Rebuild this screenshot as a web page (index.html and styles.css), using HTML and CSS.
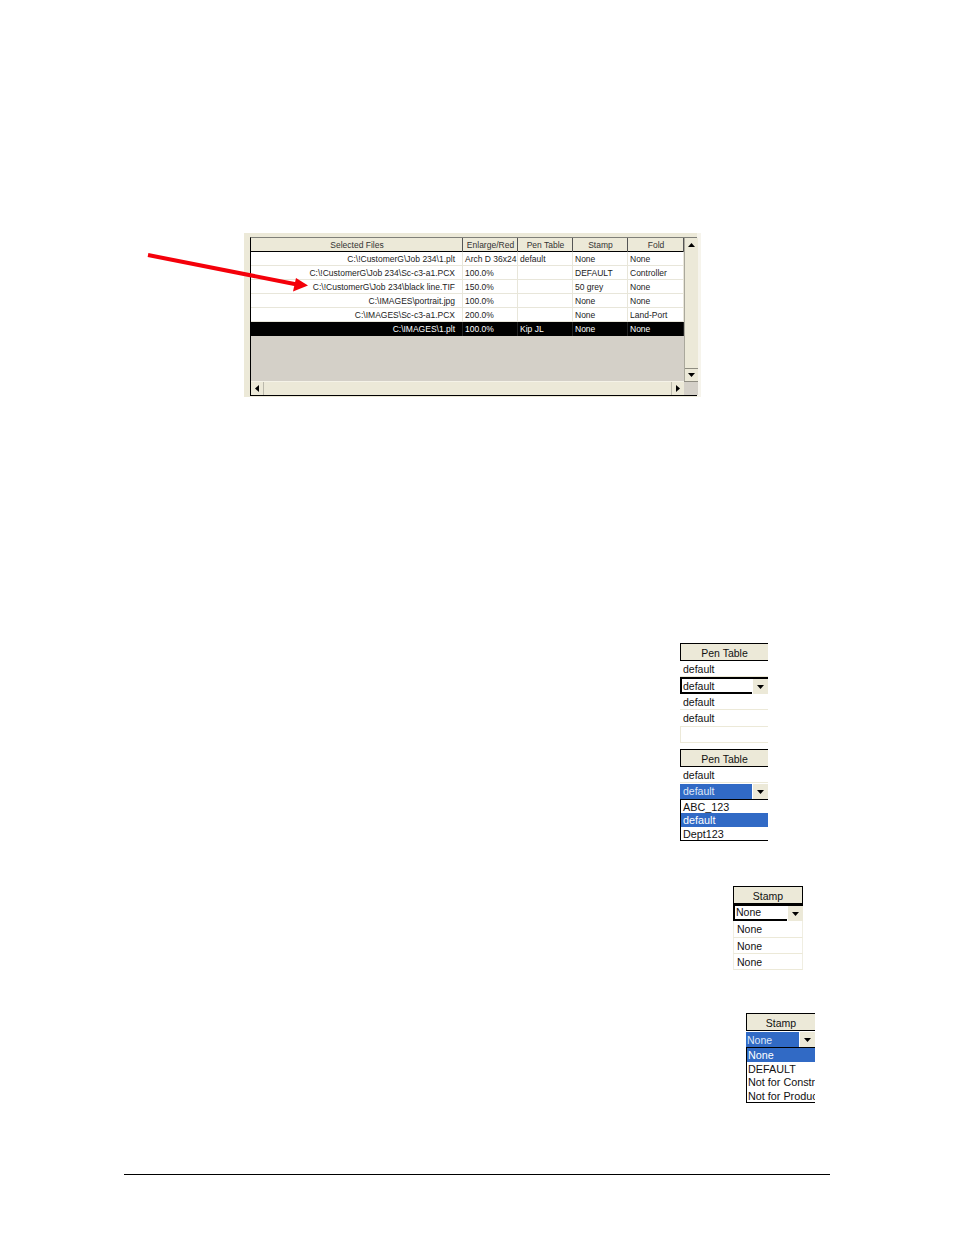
FILE: index.html
```html
<!DOCTYPE html>
<html lang="en">
<head>
<meta charset="utf-8">
<title>Selected Files</title>
<link rel="stylesheet" href="styles.css">
</head>
<body>
<main class="page">
  <section class="main-figure">
    <div class="grid-window">
      <div class="grid-body">
        <div class="file-grid">
          <div class="row head"><span class="c ctr">Selected Files</span><span class="c ctr">Enlarge/Red</span><span class="c ctr">Pen Table</span><span class="c ctr">Stamp</span><span class="c ctr">Fold</span></div>
          <div class="row"><span class="c rgt">C:\!CustomerG\Job 234\1.plt</span><span class="c">Arch D 36x24</span><span class="c">default</span><span class="c">None</span><span class="c">None</span></div>
          <div class="row"><span class="c rgt">C:\!CustomerG\Job 234\Sc-c3-a1.PCX</span><span class="c">100.0%</span><span class="c"></span><span class="c">DEFAULT</span><span class="c">Controller</span></div>
          <div class="row"><span class="c rgt">C:\!CustomerG\Job 234\black line.TIF</span><span class="c">150.0%</span><span class="c"></span><span class="c">50 grey</span><span class="c">None</span></div>
          <div class="row"><span class="c rgt">C:\IMAGES\portrait.jpg</span><span class="c">100.0%</span><span class="c"></span><span class="c">None</span><span class="c">None</span></div>
          <div class="row"><span class="c rgt">C:\IMAGES\Sc-c3-a1.PCX</span><span class="c">200.0%</span><span class="c"></span><span class="c">None</span><span class="c">Land-Port</span></div>
          <div class="row sel"><span class="c rgt">C:\IMAGES\1.plt</span><span class="c">100.0%</span><span class="c">Kip JL</span><span class="c">None</span><span class="c">None</span></div>
          <div class="grey-fill"></div>
        </div>
        <div class="vscroll">
          <span class="sbtn"><svg class="arrow" width="7" height="4" viewBox="0 0 7 4"><path d="M3.500 0L7 4H0z"/></svg></span>
          <span class="strack"></span>
          <span class="sbtn sbtn-down"><svg class="arrow" width="7" height="4" viewBox="0 0 7 4"><path d="M0 0H7L3.500 4z"/></svg></span>
        </div>
        <div class="hscroll">
          <span class="sbtn"><svg class="arrow" width="4" height="7" viewBox="0 0 4 7"><path d="M4 0V7L0 3.500z"/></svg></span>
          <span class="strack"></span>
          <span class="sbtn"><svg class="arrow" width="4" height="7" viewBox="0 0 4 7"><path d="M0 0L4 3.500L0 7z"/></svg></span>
        </div>
        <div class="corner"></div>
      </div>
    </div>
    <svg class="red-arrow" width="170" height="50" viewBox="0 0 170 50"><path d="M1 2L150 31.500" stroke="#f4000a" stroke-width="4" fill="none"/><path d="M161 32.500L149 25L146 38.500z" fill="#f4000a"/></svg>
  </section>

  <section class="snip pen pen-a">
    <div class="snip-head">Pen Table</div>
    <div class="snip-row">default</div>
    <div class="edit-row"><span class="edit-val">default</span><span class="drop"><svg class="arrow" width="7" height="4" viewBox="0 0 7 4"><path d="M0 0H7L3.500 4z"/></svg></span></div>
    <div class="snip-row">default</div>
    <div class="snip-row">default</div>
    <div class="snip-row snip-blank"></div>
  </section>

  <section class="snip pen pen-b">
    <div class="snip-head">Pen Table</div>
    <div class="snip-row">default</div>
    <div class="blue-row"><span class="blue-val">default</span><span class="drop"><svg class="arrow" width="7" height="4" viewBox="0 0 7 4"><path d="M0 0H7L3.500 4z"/></svg></span></div>
    <div class="list"><div class="opt">ABC_123</div><div class="opt on">default</div><div class="opt">Dept123</div></div>
  </section>

  <section class="snip stamp stamp-a">
    <div class="snip-head">Stamp</div>
    <div class="edit-row"><span class="edit-val">None</span><span class="drop"><svg class="arrow" width="7" height="4" viewBox="0 0 7 4"><path d="M0 0H7L3.500 4z"/></svg></span></div>
    <div class="snip-row">None</div>
    <div class="snip-row">None</div>
    <div class="snip-row">None</div>
  </section>

  <section class="snip stamp stamp-b">
    <div class="snip-head">Stamp</div>
    <div class="blue-row"><span class="blue-val">None</span><span class="drop"><svg class="arrow" width="7" height="4" viewBox="0 0 7 4"><path d="M0 0H7L3.500 4z"/></svg></span></div>
    <div class="list"><div class="opt on">None</div><div class="opt">DEFAULT</div><div class="opt">Not for Construction</div><div class="opt">Not for Production</div></div>
  </section>

  <hr class="foot-rule">
</main>
</body>
</html>
```
FILE: styles.css
```css
* { box-sizing: border-box; }
html, body { margin: 0; padding: 0; background: #fff; }
body { width: 954px; height: 1235px; overflow: hidden; font-family: "Liberation Sans", Arial, sans-serif; color: #000; }
.page { display: flow-root; width: 954px; height: 1235px; padding-top: 233px; }

.main-figure { position: relative; width: 457px; margin-left: 244px; }
.grid-window { height: 164px; padding: 4px 4px 1px 6px; background: linear-gradient(to right, #ece9d8 453px, #f6f4ec 453px); }
.grid-body { display: grid; grid-template-columns: 433px 14px; grid-template-rows: 143px 14px; width: 447px; height: 159px; border-top: 1px solid #7f7f78; border-left: 1px solid #000; border-bottom: 1px solid #000; background: #d4d0c8; }
.file-grid { display: flex; flex-direction: column; overflow: hidden; font-size: 8.500px; }
.row { display: grid; grid-template-columns: 212px 55px 55px 55px 56px; height: 14px; line-height: 15px; background: #fff; border-bottom: 1px solid #e8e6da; flex: none; }
.c { display: block; padding: 0 1px 0 2px; white-space: nowrap; border-right: 1px solid #e8e6da; color: #222; }
.rgt { text-align: right; padding-right: 7px; }
.ctr { text-align: center; }
.head { background: #ece9d8; border-bottom: 1px solid #000; }
.head .c { border-right: 1px solid #555; color: #333; }
.sel { background: #000; border-bottom: 0; }
.sel .c { color: #fff; border-right-color: #222; }
.grey-fill { flex: 1; background: #d4d0c8; }
.vscroll { display: flex; flex-direction: column; background: #ece9d8; border-left: 1px solid #aaa89c; }
.hscroll { display: flex; background: #ece9d8; border-top: 1px solid #f5f3e8; }
.sbtn { display: flex; align-items: center; justify-content: center; flex: none; width: 13px; height: 13px; background: #ece9d8; }
.sbtn-down { border-top: 1px solid #8f8d82; }
.strack { flex: 1; }
.hscroll .sbtn:first-child { border-right: 1px solid #bbb9ac; }
.hscroll .sbtn:last-child { border-left: 1px solid #bbb9ac; }
.corner { background: #d4d0c8; border-top: 1px solid #8f8d82; }
.arrow { display: block; fill: #000; }
.red-arrow { position: absolute; left: -97px; top: 20px; }

.snip { font-size: 10.500px; color: #111; }
.pen { width: 88px; }
.pen-a { margin: 246px 0 0 680px; }
.pen-b { margin: 6px 0 0 680px; }
.stamp-a { width: 70px; margin: 45px 0 0 733px; }
.stamp-b { width: 69px; margin: 43px 0 0 746px; }

.snip-head { height: 18px; line-height: 18px; text-align: center; background: #ece9d8; border-top: 1px solid #000; border-left: 1px solid #000; border-bottom: 1px solid #000; }
.stamp-a .snip-head { border-right: 1px solid #000; }
.snip-row { height: 16.200px; line-height: 16px; padding-left: 3px; border-bottom: 1px solid #ece9d8; }
.stamp-a .snip-row { border-left: 1px solid #f0eee2; border-right: 1px solid #f0eee2; }
.snip-blank { border-left: 1px solid #ece9d8; }
.edit-row { display: flex; height: 17px; border-top: 2px solid #000; border-left: 2px solid #000; line-height: 15px; }
.stamp-a .edit-row { line-height: 13px; }
.edit-val { flex: 1; padding-left: 1px; border-bottom: 2px solid #000; }
.drop { display: flex; align-items: center; justify-content: center; width: 16px; flex: none; background: #ece9d8; border-left: 1px solid #fff; padding-top: 1px; }
.blue-row { display: flex; height: 15px; margin-top: 1px; line-height: 14px; }
.stamp-b .blue-row { line-height: 16px; }
.blue-val { flex: 1; padding-left: 3px; background: #316ac5; color: #dfe8f7; }
.stamp-b .blue-val { padding-left: 1px; }
.list { border: 1px solid #000; border-right: 0; background: #fff; }
.opt { height: 13.500px; line-height: 14px; padding-left: 2px; white-space: nowrap; overflow: hidden; font-size: 10.800px; }
.stamp-b .opt { padding-left: 1px; }
.on { background: #316ac5; color: #fff; }

.foot-rule { height: 1px; width: 706px; border: 0; background: #000; position: absolute; left: 124px; top: 1174px; margin: 0; }
```
